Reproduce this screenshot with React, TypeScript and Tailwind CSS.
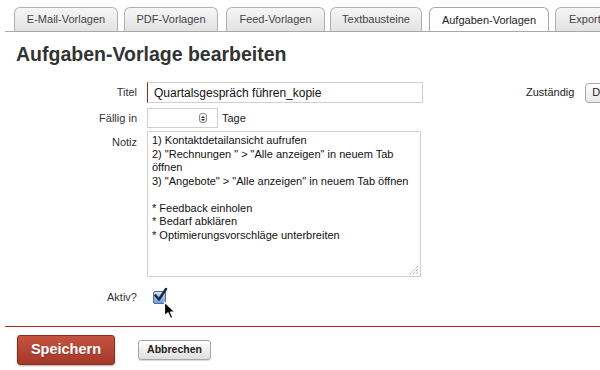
import React from "react";

const tabs: { label: string; cls: string; active?: boolean }[] = [
  { label: "E-Mail-Vorlagen", cls: "w-[104px] ml-[0px] justify-center" },
  { label: "PDF-Vorlagen", cls: "w-[94px] ml-[6px] justify-center" },
  { label: "Feed-Vorlagen", cls: "w-[99px] ml-[8px] justify-center" },
  { label: "Textbausteine", cls: "w-[92px] ml-[5px] justify-center" },
  { label: "Aufgaben-Vorlagen", cls: "w-[120px] ml-[7px] justify-center", active: true },
  { label: "Export", cls: "w-[70px] ml-[6px] justify-start pl-[13px]" },
];

const noteLines = [
  "1) Kontaktdetailansicht aufrufen",
  '2) "Rechnungen " > "Alle anzeigen" in neuem Tab',
  "öffnen",
  '3) "Angebote" > "Alle anzeigen" in neuem Tab öffnen',
  "\u00a0",
  "* Feedback einholen",
  "* Bedarf abklären",
  "* Optimierungsvorschläge unterbreiten",
];

export default function App() {
  return (
    <div className="relative w-[600px] h-[370px] overflow-hidden bg-white font-['Liberation_Sans',Arial,sans-serif] text-[#333]">
      {/* Tabs */}
      <div className="ml-[5px] pl-[9px] pt-[7px] flex items-end border-b border-[#a8a8a8] h-[32px] overflow-hidden">
        {tabs.map((t) =>
          t.active ? (
            <div
              key={t.label}
              className={`${t.cls} h-[25px] -mb-px shrink-0 rounded-t-[6px] border border-b-0 border-[#a8a8a8] bg-white flex items-center text-[11px] text-[#222]`}
            >
              {t.label}
            </div>
          ) : (
            <div
              key={t.label}
              className={`${t.cls} h-[24px] shrink-0 rounded-t-[6px] border border-b-0 border-[#b0b0b0] bg-gradient-to-b from-[#f6f6f6] to-[#e2e2e2] flex items-center text-[11px] text-[#444]`}
            >
              {t.label}
            </div>
          )
        )}
      </div>

      {/* Heading */}
      <h1 className="mt-[10px] ml-[16px] h-[24px] leading-[24px] text-[19.5px] font-bold text-[#333]">
        Aufgaben-Vorlage bearbeiten
      </h1>

      {/* Form */}
      <div className="mt-[16px]">
        {/* Titel */}
        <div className="flex items-center h-[21px]">
          <div className="w-[137px] shrink-0 text-right text-[11px]">Titel</div>
          <div className="ml-[10px] w-[276px] shrink-0 h-[21px] border border-[#d0d0d0] border-l-[#a3261c] flex items-center pl-[6px] text-[12px] text-[#111]">
            Quartalsgespräch führen_kopie
          </div>
          <div className="ml-[103px] shrink-0 text-[11px] text-[#222]">Zuständig</div>
          <div className="ml-[11px] w-[40px] h-[20px] shrink-0 rounded-[4px] border border-[#a8a8a8] bg-gradient-to-b from-white to-[#e8e8e8] flex items-center pl-[6px] text-[11px] text-[#222]">
            D
          </div>
        </div>

        {/* Fällig in */}
        <div className="mt-[5px] flex items-center h-[20px]">
          <div className="w-[137px] shrink-0 text-right text-[11px]">Fällig in</div>
          <div className="ml-[10px] w-[71px] shrink-0 h-[20px] border border-[#d0d0d0] flex items-center justify-end pr-[10px]">
            <div className="w-[8px] h-[10px] rounded-[3px] border border-[#8a8a8a] bg-gradient-to-b from-white to-[#e4e4e4] flex flex-col items-center justify-center gap-[1px]">
              <svg width="4" height="2" viewBox="0 0 4 2">
                <path d="M0 2 L2 0 L4 2 Z" fill="#333" />
              </svg>
              <svg width="4" height="2" viewBox="0 0 4 2">
                <path d="M0 0 L4 0 L2 2 Z" fill="#333" />
              </svg>
            </div>
          </div>
          <div className="ml-[4px] text-[11px] text-[#222]">Tage</div>
        </div>

        {/* Notiz */}
        <div className="mt-[3px] flex items-start">
          <div className="w-[137px] shrink-0 text-right text-[11px] pt-[4px] leading-[14px]">Notiz</div>
          <div className="relative ml-[10px] w-[274px] shrink-0 h-[146px] border border-[#d0d0d0] pl-[4px] pt-[2px] text-[11px] leading-[13.5px] text-[#111]">
            {noteLines.map((l, i) => (
              <div key={i}>{l}</div>
            ))}
            <svg className="absolute right-[1px] bottom-[1px]" width="11" height="11" viewBox="0 0 11 11">
              <path d="M10 2 L2 10 M10 5 L5 10 M10 8 L8 10" stroke="#9a9a9a" strokeWidth="1" strokeDasharray="1 1" />
            </svg>
          </div>
        </div>

        {/* Aktiv */}
        <div className="mt-[13px] flex items-center h-[14px]">
          <div className="w-[137px] shrink-0 text-right text-[11px]">Aktiv?</div>
          <div className="ml-[16px] relative w-[13px] h-[13px] shrink-0">
            <div className="w-[13px] h-[13px] rounded-[2px] border border-[#4e6d9c] bg-gradient-to-b from-[#cfe0f5] to-[#6f9fdc]" />
            <svg className="absolute left-[0px] top-[-4px]" width="16" height="16" viewBox="0 0 16 16">
              <path d="M2.5 8.5 L6 12.5 L13 2" stroke="#1b2a48" strokeWidth="2.6" fill="none" strokeLinecap="round" strokeLinejoin="round" />
            </svg>
          </div>
        </div>
      </div>

      {/* Red separator */}
      <div className="ml-[5px] mt-[22px] border-t border-[#b3261c]" />

      {/* Buttons */}
      <div className="mt-[8px] ml-[17px] flex items-center">
        <button className="w-[98px] h-[30px] rounded-[3px] border border-[#8c2c1f] bg-gradient-to-b from-[#c4533f] to-[#a3382a] text-white font-bold text-[14.5px] shadow-[0_1px_2px_rgba(0,0,0,0.3)] [text-shadow:0_1px_0_rgba(0,0,0,0.25)]">
          Speichern
        </button>
        <button className="ml-[23px] w-[73px] h-[20px] rounded-[3px] border border-[#a6a6a6] bg-gradient-to-b from-white to-[#dedede] text-[#222] font-bold text-[10.5px] shadow-[0_1px_1px_rgba(0,0,0,0.15)]">
          Abbrechen
        </button>
      </div>

      {/* Mouse cursor overlay */}
      <svg className="absolute left-[163px] top-[301px]" width="14" height="20" viewBox="0 0 14 20">
        <path
          d="M1.5 1 L1.5 15 L5 11.8 L7.5 17.5 L9.8 16.5 L7.4 11 L12 11 Z"
          fill="#000"
          stroke="#fff"
          strokeWidth="1.2"
          strokeLinejoin="round"
        />
      </svg>
    </div>
  );
}
